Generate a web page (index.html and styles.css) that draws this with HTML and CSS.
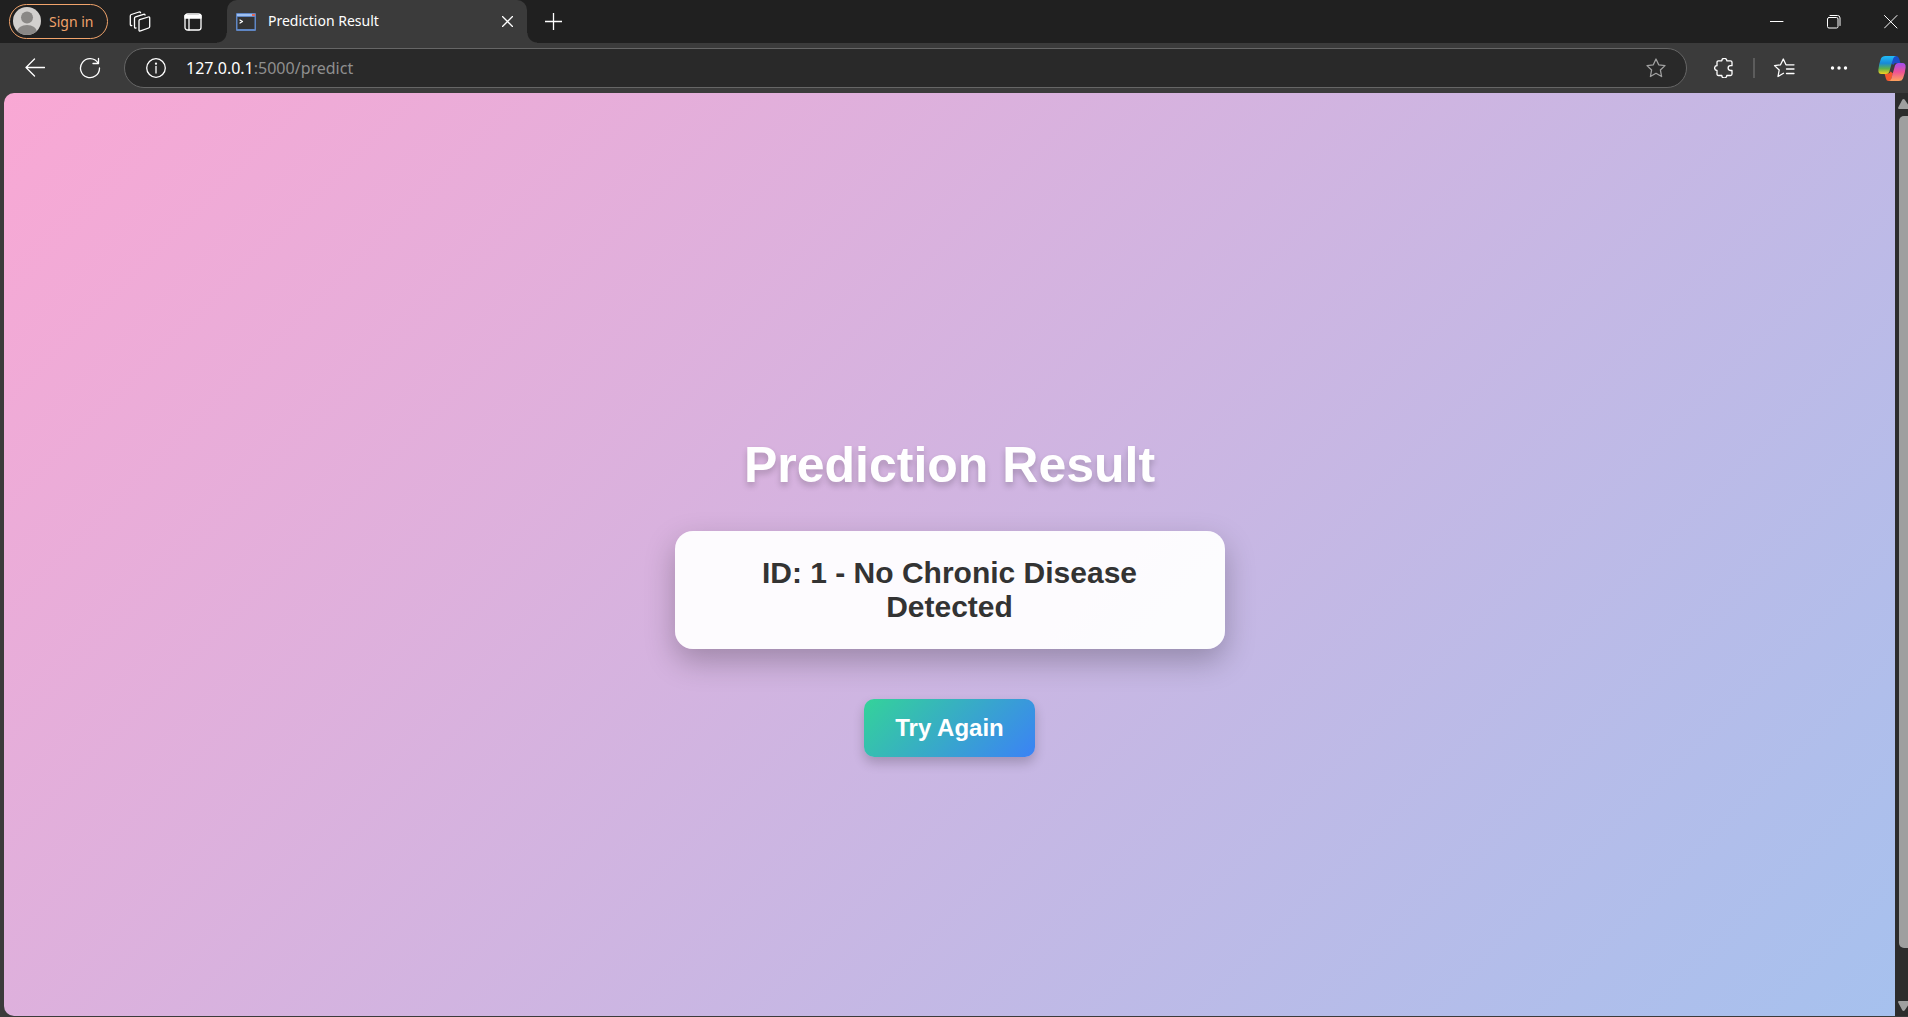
FILE: index.html
```html
<!DOCTYPE html>
<html lang="en">
<head>
<meta charset="utf-8">
<title>Prediction Result</title>
<link rel="stylesheet" href="styles.css">
</head>
<body>
<div class="browser">
  <header class="titlebar">
    <button class="profile" type="button">
      <svg class="avatar" viewBox="0 0 28 28" aria-hidden="true"><defs><clipPath id="face"><circle cx="14" cy="14" r="14"/></clipPath></defs><g clip-path="url(#face)"><path fill="#d2d0ce" d="M0 0h28v28H0z"/><circle cx="14" cy="10.500" r="6" fill="#8a8886"/><ellipse cx="14" cy="25" rx="10" ry="7" fill="#8a8886"/></g></svg>
      <span>Sign in</span>
    </button>
    <button class="icon-button tool" type="button" aria-label="Workspaces">
      <svg width="22" height="22" viewBox="0 0 22 22"><path d="M10.700 8.600 19.300 6q1.400-.4 1.400 1v8.500q0 1.200-1 1.500L11.500 19.900q-1.500.5-1.500-1V9.800q0-.9.700-1.200zM7 17q-1.500.4-1.500-1.200V7.300Q5.500 6.200 6.500 5.800L14.500 3.300q1.200-.3 1.600.7M2.800 14.500q-1.500.4-1.500-1.200V5q0-1.100 1-1.500L10 1q1.200-.3 1.600.7"/></svg>
    </button>
    <button class="icon-button tool" type="button" aria-label="Tab actions">
      <svg width="18" height="18" viewBox="0 0 18 18"><rect x="1" y="1" width="16" height="16" rx="2.500"/><path fill="#fff" d="M1 2.500h16V5H1z"/><path d="M5 5v12"/></svg>
    </button>
    <div class="tab">
      <svg width="20" height="18" viewBox="0 0 20 18" aria-hidden="true"><rect width="20" height="18" rx="1" fill="#5f86c4" stroke="none"/><path fill="#9fc0f0" stroke="none" d="M1 1h18v2H1z"/><path fill="#e06a5a" stroke="none" d="M16 1h3v2h-3z"/><path fill="#333" stroke="none" d="M1.500 4h17v12h-17z"/><path d="m4 7 2.500 1.500L4 10"/></svg>
      <span class="tab-title">Prediction Result</span>
      <button class="icon-button tab-close" type="button" aria-label="Close tab"><svg width="11" height="11" viewBox="0 0 11 11"><path d="m.5.500 10 10M10.500.500l-10 10"/></svg></button>
    </div>
    <button class="icon-button new-tab" type="button" aria-label="New tab"><svg width="17" height="17" viewBox="0 0 17 17"><path d="M8.500 0v17M0 8.500h17"/></svg></button>
    <div class="window-controls">
      <button class="icon-button" type="button" aria-label="Minimize"><svg width="14" height="14" viewBox="0 0 14 14"><path d="M0 6.500h13"/></svg></button>
      <button class="icon-button" type="button" aria-label="Restore"><svg width="14" height="14" viewBox="0 0 14 14"><rect x=".5" y="2.500" width="10.500" height="10.500" rx="1.500"/><path d="M3 .5h7.500q2.500 0 2.500 2.500v7.500"/></svg></button>
      <button class="icon-button" type="button" aria-label="Close window"><svg width="14" height="14" viewBox="0 0 14 14"><path d="m.5.500 12.500 12.500M13 .5.500 13"/></svg></button>
    </div>
  </header>
  <nav class="toolbar">
    <button class="icon-button back" type="button" aria-label="Back"><svg width="20" height="20" viewBox="0 0 20 20"><path d="M19.500 9.500H1M9.500 1 1 9.500 9.500 18"/></svg></button>
    <button class="icon-button reload" type="button" aria-label="Reload"><svg width="22" height="22" viewBox="0 0 22 22"><path d="M19 6A9.500 9.500 0 1 0 20.500 11M19.500 1.500v5H14"/></svg></button>
    <div class="address">
      <svg width="20" height="20" viewBox="0 0 20 20" aria-hidden="true"><circle cx="10" cy="10" r="9.300"/><path d="M10 8.500V15"/><circle cx="10" cy="5.700" r=".5"/></svg>
      <a class="url" href="#"><b>127.0.0.1</b>:5000/predict</a>
      <button class="icon-button star" type="button" aria-label="Add to favorites"><svg width="20" height="20" viewBox="0 0 20 20"><path d="m10 1 2.700 5.800 6.300.8-4.600 4.400 1.200 6.500L10 15.300l-5.600 3.200L5.600 12 1 7.600l6.300-.8z"/></svg></button>
    </div>
    <div class="actions">
      <button class="icon-button" type="button" aria-label="Extensions"><svg width="20" height="20" viewBox="0 0 20 20"><path d="M4.500 2.800h3.300a2.500 2.500 0 0 1 5 0h3.700q1.500 0 1.500 1.500v3.400h-1.500a2.400 2.400 0 0 0 0 4.800H18v3.500q0 1.500-1.500 1.500h-3.700a2.500 2.500 0 0 1-5 0H4.500Q3 17.500 3 16v-3.500a2.400 2.400 0 0 1 0-4.800V4.300q0-1.500 1.500-1.500z"/></svg></button>
      <span class="divider"></span>
      <button class="icon-button" type="button" aria-label="Favorites"><svg width="22" height="20" viewBox="0 0 22 20"><path d="M10.500 15.300 5 18.500 6.200 12 1.500 7.600l6-.8L10.300 1 13 6.800h8M13.500 11H21M13.500 15.500H21"/></svg></button>
      <button class="icon-button" type="button" aria-label="Settings and more"><svg width="18" height="4" viewBox="0 0 18 4"><g fill="#fff" stroke="none"><circle cx="2.500" cy="2" r="1.700"/><circle cx="9" cy="2" r="1.700"/><circle cx="15.500" cy="2" r="1.700"/></g></svg></button>
      <button class="icon-button" type="button" aria-label="Copilot">
        <svg width="28" height="27" viewBox="0 0 28 27"><defs><linearGradient id="cool" x1="0" y1="0" x2="0" y2="1"><stop offset="0" stop-color="#22bdf7"/><stop offset=".4" stop-color="#1789d8"/><stop offset=".7" stop-color="#5db04c"/><stop offset="1" stop-color="#f5d020"/></linearGradient><linearGradient id="warm" x1="0" y1="0" x2="0" y2="1"><stop offset="0" stop-color="#a24df0"/><stop offset=".5" stop-color="#ee5296"/><stop offset="1" stop-color="#ffa35c"/></linearGradient></defs><g stroke="none"><path fill="#1a4ec8" d="M12 1h6q2.500 0 3.200 2.700L22.500 8H18q-2 0-2.700 2L13 8z"/><path fill="#f4572e" d="M6.500 18.500H10q2 0 2.600-2l2.400 2-2.500 7.500H10.500q-2 0-2.600-2.500z"/><path fill="url(#cool)" d="M7.500 1H18q-2 0-2.800 2.500l-4 13.500q-.8 2-3.200 2H3.500Q0 19 .4 14.500 1 8.500 3 3.500 4 1 7.500 1z"/><path fill="url(#warm)" d="M20 8h4.500q3.500 0 3.100 4.500-.6 6-2.600 11-1 2.500-4 2.500H10.500q2 0 2.800-2.500L17 10.500Q17.800 8 20 8z"/></g></svg>
      </button>
    </div>
  </nav>
  <div class="viewport">
    <main class="page">
      <h1>Prediction Result</h1>
      <p class="result">ID: 1 - No Chronic Disease Detected</p>
      <a class="retry" href="#">Try Again</a>
    </main>
    <div class="scrollbar" aria-hidden="true">
      <svg width="10" height="10" viewBox="0 0 10 10"><path d="M5.500 0q.8 0 1.300.8L10 5.500V10H.8Q-.3 9.600.3 8.300L4.300.8Q4.700 0 5.500 0z"/></svg>
      <span class="thumb"></span>
      <svg width="10" height="10" viewBox="0 0 10 10"><path d="M5.500 10q.8 0 1.300-.8L10 4.500V0H.8Q-.3.400.3 1.700l4 7.500Q4.700 10 5.500 10z"/></svg>
    </div>
  </div>
</div>
</body>
</html>
```

FILE: styles.css
```css
* { box-sizing: border-box; }

body {
  margin: 0;
  background: #3b3b3b;
  font-family: "Noto Sans", "Open Sans", sans-serif;
  color: #fff;
}

button {
  margin: 0;
  padding: 0;
  border: 0;
  background: none;
  color: inherit;
  font: inherit;
}

svg { display: block; flex: none; }

.browser {
  display: flex;
  flex-direction: column;
  height: 100vh;
  overflow: hidden;
}

.icon-button {
  display: flex;
  align-items: center;
  justify-content: center;
  flex: none;
}

.icon-button svg,
.address > svg,
.tab > svg {
  fill: none;
  stroke: #fff;
  stroke-width: 1.3;
  stroke-linecap: round;
  stroke-linejoin: round;
}

/* Title bar */
.titlebar {
  display: flex;
  align-items: center;
  flex: none;
  height: 43px;
  padding-left: 9px;
  background: #202020;
}

.profile {
  display: flex;
  align-items: center;
  gap: 8px;
  width: 99px;
  height: 35px;
  padding: 0 0 1px 3px;
  border: 1px solid #f0a36b;
  border-radius: 18px;
  color: #f0a36b;
  font-size: 14px;
}

.avatar { width: 28px; height: 28px; }

.tool { width: 53px; height: 35px; }
.profile + .tool { margin-left: 5px; }

.tab {
  position: relative;
  display: flex;
  align-items: center;
  width: 300px;
  height: 43px;
  margin-left: 8px;
  padding: 0 14px 0 9px;
  border-radius: 10px 10px 0 0;
  background: #3b3b3b;
  font-size: 14px;
}

.tab::before,
.tab::after {
  content: "";
  position: absolute;
  bottom: 0;
  width: 10px;
  height: 10px;
}

.tab::before {
  right: 100%;
  background: radial-gradient(circle at 0 0, #202020 9px, #3b3b3b 10px);
}

.tab::after {
  left: 100%;
  background: radial-gradient(circle at 100% 0, #202020 9px, #3b3b3b 10px);
}

.tab-title { margin-left: 12px; padding-bottom: 2px; }
.tab-close { margin-left: auto; }
.new-tab { width: 52px; height: 41px; }

.window-controls { display: flex; margin: 0 -11px 0 auto; }
.window-controls .icon-button { width: 57px; height: 43px; }
.window-controls svg { stroke-width: 1; }

/* Toolbar */
.toolbar {
  display: flex;
  align-items: center;
  flex: none;
  height: 50px;
  padding-left: 7px;
}

.back,
.reload { width: 55px; }

.address {
  display: flex;
  align-items: center;
  flex: 1;
  height: 40px;
  margin-left: 7px;
  padding: 0 20px 0 21px;
  border: 1px solid #666;
  border-radius: 20px;
  background: #292929;
}

.url {
  margin-left: 20px;
  color: #8f8f8f;
  font-size: 16px;
  text-decoration: none;
}

.url b { color: #fff; font-weight: 400; }
.star { margin-left: auto; }
.star svg { stroke: #a0a0a0; }

.actions { display: flex; align-items: center; padding-left: 27px; }
.divider { width: 2px; height: 20px; margin: 0 18px 0 19px; background: #5c5c5c; }
.actions .icon-button + .icon-button { margin-left: 35px; }
.actions .icon-button:last-child { margin-left: 30px; margin-right: 2px; }

/* Page content */
.viewport {
  display: flex;
  flex: 1;
  min-height: 0;
  padding: 0 0 1px 4px;
}

.page {
  display: flex;
  flex-direction: column;
  align-items: center;
  justify-content: center;
  flex: 1;
  padding-top: 85px;
  border-radius: 10px 0 0 10px;
  background: linear-gradient(135deg, #f9a8d4, #a6c1ee);
  font-family: "Liberation Sans", Arial, sans-serif;
  font-weight: 700;
}

.page h1 {
  margin: 0 0 38px;
  font-size: 50px;
  line-height: 56px;
  text-shadow: 0 4px 6px rgba(0, 0, 0, 0.2);
}

.result {
  width: 550px;
  margin: 0 0 50px;
  padding: 25px 50px;
  border-radius: 18px;
  background: rgba(255, 255, 255, 0.95);
  box-shadow: 0 12px 30px rgba(0, 0, 0, 0.25);
  color: #333;
  font-size: 30px;
  line-height: 34px;
  text-align: center;
}

.retry {
  padding: 15px 31px;
  border-radius: 10px;
  background: linear-gradient(135deg, #34d399, #3b82f6);
  box-shadow: 0 6px 12px rgba(0, 0, 0, 0.2);
  color: #fff;
  font-size: 24px;
  line-height: 28px;
  text-decoration: none;
}

.scrollbar {
  display: flex;
  flex-direction: column;
  align-items: flex-end;
  flex: none;
  width: 13px;
  padding: 6px 0 5px;
  overflow: hidden;
  background: #2c2c2c;
}

.scrollbar svg { fill: #9f9f9f; }

.thumb {
  width: 9px;
  flex: 1;
  margin: 7px 0 53px;
  border-radius: 5px 0 0 5px;
  background: #9f9f9f;
}
```
